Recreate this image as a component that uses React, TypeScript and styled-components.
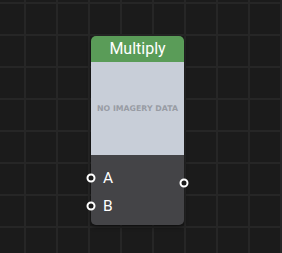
import styled, { createGlobalStyle } from 'styled-components'

const GlobalStyle = createGlobalStyle`
  html, body {
    margin: 0;
    padding: 0;
    background: #1b1b1b;
  }
`

type PortProps = {
  side: 'left' | 'right'
}

export default function App() {
  return (
    <>
      <GlobalStyle />
      <Canvas>
        <Node style={{ left: 91, top: 36 }}>
          <NodeHeader>Multiply</NodeHeader>
          <Preview>
            <span>NO IMAGERY DATA</span>
          </Preview>
          <NodeBody>
            <Inputs>
              <PortRow>
                <Port side="left" />
                <PortLabel>A</PortLabel>
              </PortRow>
              <PortRow>
                <Port side="left" />
                <PortLabel>B</PortLabel>
              </PortRow>
            </Inputs>
            <OutputSlot>
              <Port side="right" />
            </OutputSlot>
          </NodeBody>
        </Node>
      </Canvas>
    </>
  )
}

// ========== Styled Components ==========

const Canvas = styled.div`
  position: relative;
  width: 282px;
  height: 253px;
  overflow: hidden;
  background-color: #1b1b1b;
  background-image: linear-gradient(to right, #262626 0, #262626 2px, transparent 2px),
    linear-gradient(to bottom, #262626 0, #262626 2px, transparent 2px);
  background-size: 32px 32px;
  background-position: 24px 2px;
  font-family: Roboto, 'Liberation Sans', sans-serif;
`

const Node = styled.div`
  position: absolute;
  width: 93px;
  border-radius: 5px;
  box-shadow: 0 2px 4px rgba(0, 0, 0, 0.5);
`

const NodeHeader = styled.div`
  height: 26px;
  background: #5a9c58;
  border-radius: 5px 5px 0 0;
  color: #ffffff;
  font-size: 16px;
  line-height: 26px;
  text-align: center;
`

const Preview = styled.div`
  height: 93px;
  background: #c8ced8;
  display: flex;
  align-items: center;
  justify-content: center;

  span {
    color: #989ca4;
    font-family: 'DejaVu Sans', sans-serif;
    font-weight: bold;
    font-size: 7.8px;
    letter-spacing: 0;
    white-space: nowrap;
  }
`

const NodeBody = styled.div`
  position: relative;
  height: 70px;
  background: #444447;
  border-radius: 0 0 5px 5px;
  display: flex;
  align-items: flex-start;
  justify-content: space-between;
`

const Inputs = styled.div`
  display: flex;
  flex-direction: column;
  gap: 6px;
  padding-top: 12px;
`

const PortRow = styled.div`
  position: relative;
  height: 22px;
  display: flex;
  align-items: center;
`

const OutputSlot = styled.div`
  position: relative;
  width: 0;
  height: 22px;
  margin-top: 17px;
`

const PortLabel = styled.span`
  color: #ffffff;
  font-size: 15.5px;
  margin-left: 12px;
`

const Port = styled.div<PortProps>`
  position: absolute;
  width: 5px;
  height: 5px;
  border: 2px solid #ffffff;
  border-radius: 50%;
  background: #1b1b1b;
  top: 50%;
  transform: translate(-50%, -50%);
  left: ${(p) => (p.side === 'left' ? '0' : '100%')};
`
